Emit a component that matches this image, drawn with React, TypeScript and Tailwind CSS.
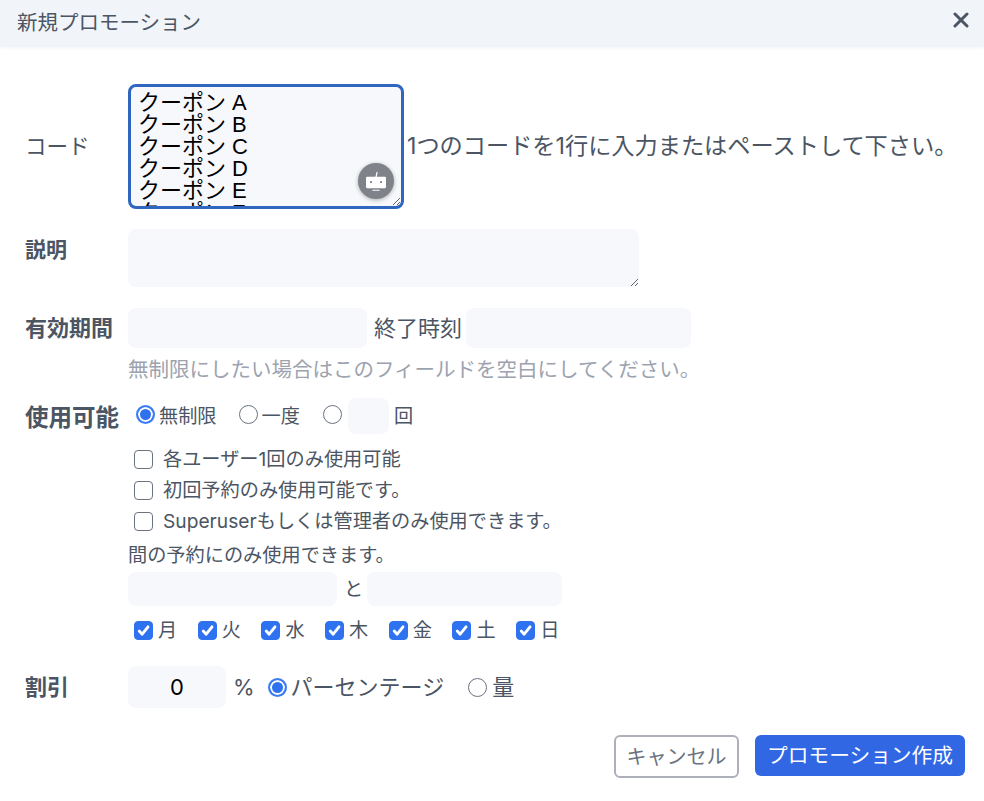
const coupons = ['クーポン A', 'クーポン B', 'クーポン C', 'クーポン D', 'クーポン E', 'クーポン F'].join('\n')
const days = ['月', '火', '水', '木', '金', '土', '日']
const field = 'rounded-lg bg-[#f6f8fb] outline-none'

function Radio({ checked, name }: { checked?: boolean; name: string }) {
  return (
    <input
      type="radio"
      name={name}
      defaultChecked={checked}
      className="h-[19px] w-[19px] shrink-0 appearance-none rounded-full border border-[#6b7280] bg-white checked:border-2 checked:border-[#3b7cf5] checked:bg-[#2f72f0] checked:shadow-[inset_0_0_0_2px_white]"
    />
  )
}

function Box({ checked }: { checked?: boolean }) {
  return (
    <span className="relative flex h-[19px] w-[19px] shrink-0">
      <input
        type="checkbox"
        defaultChecked={checked}
        className="h-full w-full appearance-none rounded-[4px] border border-[#6b7280] bg-white checked:border-[#2f72f0] checked:bg-[#2f72f0]"
      />
      {checked ? (
        <svg viewBox="0 0 16 16" className="pointer-events-none absolute inset-0 h-full w-full" fill="none" stroke="white" strokeWidth="2.4" strokeLinecap="round" strokeLinejoin="round">
          <path d="M4.4 8.4l2.5 2.7 4.9-6.2" />
        </svg>
      ) : null}
    </span>
  )
}

function BotButton() {
  return (
    <span className="absolute right-[10px] bottom-[10px] flex h-[36px] w-[36px] items-center justify-center rounded-full bg-[#7f8389] shadow-[0_1px_4px_rgba(0,0,0,0.3)]">
      <svg viewBox="0 0 24 24" className="h-[30px] w-[30px]" fill="white">
        <path d="M12.5 4.6l.9.3-.9 3.8h-1z" />
        <rect x="4" y="8.5" width="16" height="9.2" rx="0.9" />
        <rect x="9" y="18.9" width="6" height="0.8" rx="0.4" />
        <circle cx="8" cy="12.8" r="0.9" fill="#7f8389" />
        <circle cx="16" cy="12.8" r="0.9" fill="#7f8389" />
      </svg>
    </span>
  )
}

export default function App() {
  return (
    <div className="h-[801px] w-[984px] overflow-hidden bg-white font-['Inter','Noto_Sans_CJK_JP',sans-serif] text-[#4b5563]">
      <div className="flex h-[47px] items-center justify-between bg-[#f1f4f9] pr-[15px] pl-[17px] shadow-[0_1px_3px_rgba(241,244,249,0.9)]">
        <h1 className="text-[20.5px] font-normal">新規プロモーション</h1>
        <svg viewBox="0 0 16 16" className="mb-[7px] h-[16px] w-[16px]" fill="none" stroke="#4b5563" strokeWidth="3" strokeLinecap="round">
          <path d="M2 2l12 12M14 2L2 14" />
        </svg>
      </div>

      <div className="pt-[37px] pl-[25px]">
        <div className="flex items-center">
          <label className="w-[103px] shrink-0 text-[21.5px]">コード</label>
          <div className="relative flex h-[125px] w-[276px] shrink-0">
            <textarea
              defaultValue={coupons}
              className="h-full w-full resize overflow-hidden rounded-lg border-[3px] border-[#2f66c0] bg-[#f6f8fc] px-[7px] py-[5px] font-['Liberation_Sans','Noto_Sans_CJK_JP',sans-serif] text-[22px] leading-[22px] text-black outline-none"
            />
            <BotButton />
          </div>
          <span className="ml-[3px] text-[23.2px] whitespace-nowrap">1つのコードを1行に入力またはペーストして下さい。</span>
        </div>

        <div className="mt-[20px] flex">
          <label className="w-[103px] shrink-0 text-[21px] leading-[42px] font-bold">説明</label>
          <textarea className={`h-[58px] w-[511px] resize ${field}`} />
        </div>

        <div className="mt-[21px] flex items-center">
          <label className="w-[103px] shrink-0 text-[22px] font-bold">有効期間</label>
          <input className={`h-[40px] w-[239px] ${field}`} />
          <span className="mr-[4px] ml-[7px] text-[22px] whitespace-nowrap">終了時刻</span>
          <input className={`h-[40px] w-[225px] ${field}`} />
        </div>
        <p className="mt-[8px] ml-[103px] text-[20.5px] leading-[28px] whitespace-nowrap text-[#9ca3af]">無制限にしたい場合はこのフィールドを空白にしてください。</p>

        <div className="mt-[8px] flex">
          <label className="w-[103px] shrink-0 pt-[8px] text-[23.5px] leading-[36px] font-bold">使用可能</label>
          <div className="w-[520px] pt-[6px] text-[19.2px]">
            <div className="flex h-[36px] items-center pl-[8px]">
              <span className="mb-[4px] flex"><Radio name="usage" checked /></span>
              <span className="ml-[4px]">無制限</span>
              <span className="mb-[4px] ml-[22px] flex"><Radio name="usage" /></span>
              <span className="ml-[4px]">一度</span>
              <span className="mb-[4px] ml-[23px] flex"><Radio name="usage" /></span>
              <input className={`ml-[6px] h-[36px] w-[41px] ${field}`} />
              <span className="ml-[5px]">回</span>
            </div>
            <div className="mt-[12px] flex flex-col gap-[5px] pl-[6px]">
              <label className="flex h-[26px] items-center gap-[10px]"><Box />各ユーザー1回のみ使用可能</label>
              <label className="flex h-[26px] items-center gap-[10px]"><Box />初回予約のみ使用可能です。</label>
              <label className="flex h-[26px] items-center gap-[10px]"><Box />Superuserもしくは管理者のみ使用できます。</label>
            </div>
            <p className="mt-[8px] leading-[26px]">間の予約にのみ使用できます。</p>
            <div className="mt-[4px] flex items-center">
              <input className={`h-[34px] w-[209px] ${field}`} />
              <span className="mr-[4px] ml-[7px]">と</span>
              <input className={`h-[34px] w-[195px] ${field}`} />
            </div>
            <div className="mt-[12px] flex pl-[6px]">
              {days.map((d) => (
                <label key={d} className="flex h-[24px] w-[63.7px] items-center gap-[5px]">
                  <Box checked />
                  {d}
                </label>
              ))}
            </div>
          </div>
        </div>

        <div className="mt-[24px] flex items-center text-[22px]">
          <label className="w-[103px] shrink-0 text-[22px] font-bold">割引</label>
          <input defaultValue="0" className={`h-[42px] w-[98px] text-center text-[22px] text-black ${field}`} />
          <span className="ml-[7px]">%</span>
          <span className="ml-[13px] flex"><Radio name="kind" checked /></span>
          <span className="ml-[4px]">パーセンテージ</span>
          <span className="ml-[24px] flex"><Radio name="kind" /></span>
          <span className="ml-[5px]">量</span>
        </div>
      </div>

      <div className="mt-[27px] flex justify-end gap-[16px] pr-[19px]">
        <button className="h-[43px] w-[125px] rounded-md border-2 border-[#adb0b8] bg-white text-[20px] text-[#6b7280]">キャンセル</button>
        <button className="h-[41px] w-[210px] rounded-md bg-[#3267e3] text-[20.7px] text-white">プロモーション作成</button>
      </div>
    </div>
  )
}
